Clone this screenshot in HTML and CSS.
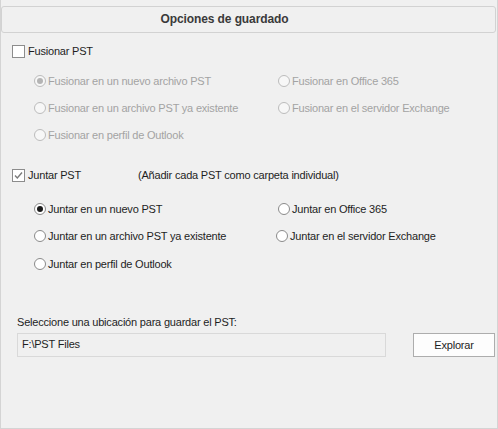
FILE: index.html
```
<!DOCTYPE html>
<html lang="es">
  <head>
    <meta charset="UTF-8" />
    <meta name="viewport" content="width=device-width, initial-scale=1.0" />
    <title>Opciones de guardado</title>
    <link rel="stylesheet" href="styles.css">
  </head>
  <body>
    <div class="panel">
      <div class="header">Opciones de guardado</div>

      <!-- Fusionar -->
      <div class="check-row row-fusionar">
        <span class="checkbox"></span>
        <span>Fusionar PST</span>
      </div>
      <div class="options disabled opts-fusionar">
        <div class="opt"><span class="radio checked"></span>Fusionar en un nuevo archivo PST</div>
        <div class="opt"><span class="radio"></span>Fusionar en Office 365</div>
        <div class="opt"><span class="radio"></span>Fusionar en un archivo PST ya existente</div>
        <div class="opt"><span class="radio"></span>Fusionar en el servidor Exchange</div>
        <div class="opt"><span class="radio"></span>Fusionar en perfil de Outlook</div>
      </div>

      <!-- Juntar -->
      <div class="check-row row-juntar">
        <span class="checkbox">
          <svg width="11" height="11" viewBox="0 0 11 11"><path d="M2 5.5 L4.3 8 L9 2.5" fill="none" stroke="#7a7a7a" stroke-width="1.4"/></svg>
        </span>
        <span class="check-label">Juntar PST</span>
        <span class="note">(Añadir cada PST como carpeta individual)</span>
      </div>
      <div class="options opts-juntar">
        <div class="opt"><span class="radio checked"></span>Juntar en un nuevo PST</div>
        <div class="opt"><span class="radio"></span>Juntar en Office 365</div>
        <div class="opt"><span class="radio"></span>Juntar en un archivo PST ya existente</div>
        <div class="opt shift"><span class="radio"></span>Juntar en el servidor Exchange</div>
        <div class="opt tall"><span class="radio"></span>Juntar en perfil de Outlook</div>
      </div>

      <!-- Ubicación -->
      <div class="location">
        <div class="location-label">Seleccione una ubicación para guardar el PST:</div>
        <div class="location-row">
          <div class="path">F:\PST Files</div>
          <button class="browse">Explorar</button>
        </div>
      </div>
    </div>
  </body>
</html>
```
FILE: styles.css
```
body {
  margin: 0;
  background: #f0f0f0;
  font-family: "Liberation Sans", Arial, sans-serif;
  font-size: 11px;
  letter-spacing: -0.2px;
  color: #1e1e1e;
}

.panel {
  width: 498px;
  height: 429px;
  box-sizing: border-box;
  border-left: 1px solid #d4d4d4;
  border-right: 1px solid #d4d4d4;
  border-bottom: 1px solid #d4d4d4;
  padding-top: 6px;
}

.header {
  height: 25px;
  margin-right: 1px;
  border: 1px solid #d2d2d2;
  border-radius: 3px;
  text-align: center;
  font-weight: bold;
  font-size: 12px;
  letter-spacing: -0.1px;
  line-height: 25px;
  color: #3a3a3a;
  padding-right: 48px;
}

.check-row {
  display: flex;
  align-items: center;
  height: 14px;
  padding-left: 11px;
}

.row-fusionar {
  margin-top: 11px;
}

.row-juntar {
  margin-top: 20px;
}

.checkbox {
  width: 11px;
  height: 11px;
  border: 1px solid #8c8c8c;
  background: #fff;
  margin-right: 3px;
  display: flex;
}

.check-label {
  width: 110px;
}

.options {
  display: grid;
  grid-template-columns: 244px auto;
  grid-auto-rows: 27px;
  padding-left: 33px;
  align-items: center;
}

.opts-fusionar {
  margin-top: 9px;
}

.opts-juntar {
  margin-top: 13px;
}

.opt {
  display: flex;
  align-items: center;
}

.opt.shift {
  margin-left: -2px;
}

.opt.tall {
  margin-top: 3px;
}

.radio {
  width: 10px;
  height: 10px;
  border: 1px solid #8a8a8a;
  border-radius: 50%;
  background: #fff;
  margin-right: 2px;
  display: flex;
  align-items: center;
  justify-content: center;
}

.radio.checked::after {
  content: "";
  width: 6px;
  height: 6px;
  border-radius: 50%;
  background: #1a1a1a;
}

.disabled {
  color: #a3a3a3;
}

.disabled .radio {
  border-color: #bcbcbc;
  background: #f7f7f7;
}

.disabled .radio.checked::after {
  background: #b4b4b4;
}

.location {
  margin-top: 39px;
  padding-left: 16px;
}

.location-label {
  height: 14px;
  line-height: 14px;
}

.location-row {
  display: flex;
  margin-top: 4px;
}

.path {
  width: 363px;
  height: 22px;
  border: 1px solid #d9d9d9;
  padding-left: 4px;
  line-height: 20px;
}

.browse {
  width: 82px;
  height: 24px;
  margin-left: 27px;
  border: 1px solid #adadad;
  background: #fdfdfd;
  font-family: inherit;
  font-size: 11px;
  letter-spacing: -0.2px;
  color: #1e1e1e;
  padding: 0;
}
```
